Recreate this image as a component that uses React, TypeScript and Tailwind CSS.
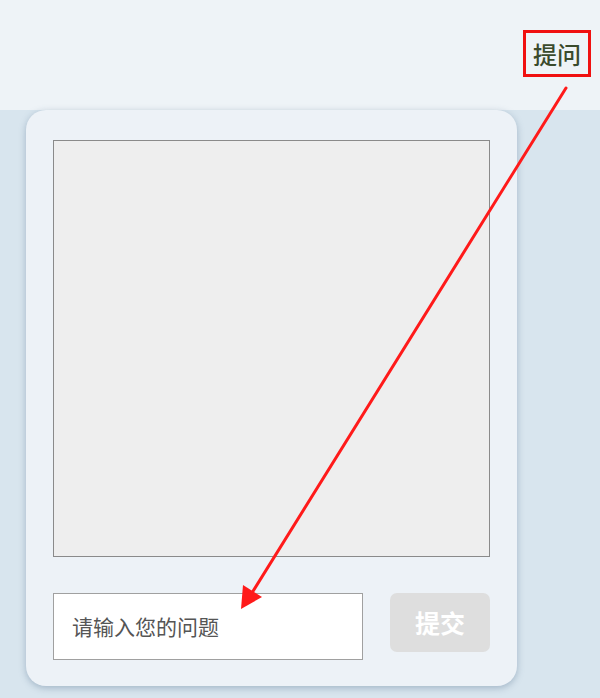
import React from "react";

const cjk = { fontFamily: '"Noto Sans CJK SC", "Noto Sans", sans-serif' };

function Pointer() {
  // red pointer from the header label down to the question box
  return (
    <svg
      className="absolute left-0 top-0 pointer-events-none"
      width={600}
      height={698}
      viewBox="0 0 600 698"
    >
      <line x1={566} y1={88} x2={250} y2={596} stroke="#ff1a1a" strokeWidth={3} strokeLinecap="round" />
      <polygon points="241,609 243,585 262,597" fill="#ff1a1a" />
    </svg>
  );
}

export default function App() {
  return (
    <div className="relative w-[600px] h-[698px] overflow-hidden bg-[#d8e5ee]" style={cjk}>
      <div className="h-[110px] bg-[#eef3f7] flex justify-end items-start pt-[30px] pr-[9px]">
        <div className="border-[3px] border-[#f01010] px-[7px] h-[47px] flex items-center text-[24px] font-medium leading-none text-[#3a4a2c]">
          提问
        </div>
      </div>
      <div className="ml-[26px] w-[491px] h-[576px] rounded-[20px] bg-[#edf2f7] shadow-[0_2px_7px_rgba(80,110,140,0.4)] pt-[30px] pl-[27px]">
        <div className="w-[437px] h-[417px] bg-[#eeeeee] border border-[#8a8a8a]" />
        <div className="mt-[36px] flex items-start gap-[27px]">
          <div className="w-[310px] h-[67px] bg-white border border-[#a0a0a0] flex items-center pl-[18px] text-[21px] text-[#555555]">
            请输入您的问题
          </div>
          <button className="w-[100px] h-[59px] rounded-[7px] bg-[#dedede] text-white text-[25px] font-bold">
            提交
          </button>
        </div>
      </div>
      <Pointer />
    </div>
  );
}
